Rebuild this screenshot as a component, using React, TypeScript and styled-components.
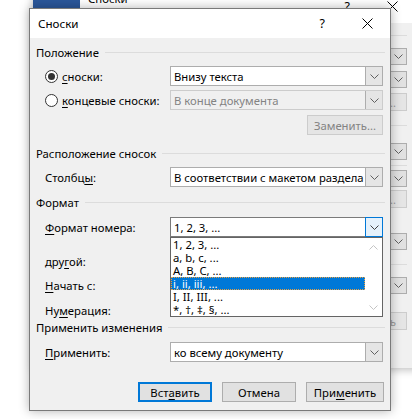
import styled, { createGlobalStyle } from 'styled-components';

const GlobalStyle = createGlobalStyle`
    html, body {
        margin: 0;
        padding: 0;
        background: #ffffff;
    }
    body {
        font-family: "Noto Sans", "Liberation Sans", sans-serif;
        font-size: 11.3px;
        color: #000000;
    }
`

const Chevron = ({up, color = '#606060'}: {up?: boolean; color?: string}) => (
    <svg width="9" height="5" viewBox="0 0 9 5">
        <polyline
            points={up ? '0.5,4.5 4.5,0.5 8.5,4.5' : '0.5,0.5 4.5,4.5 8.5,0.5'}
            fill="none"
            stroke={color}
            strokeWidth="1"
        />
    </svg>
);

const CloseIcon = () => (
    <svg width="11" height="11" viewBox="0 0 11 11">
        <path d="M0.5 0.5 L10.5 10.5 M10.5 0.5 L0.5 10.5" stroke="#000" strokeWidth="1" fill="none"/>
    </svg>
);

const formats = ['1, 2, 3, ...', 'a, b, c, ...', 'A, B, C, ...', 'i, ii, iii, ...', 'I, II, III, ...', '*, †, ‡, §, ...'];

export default function App() {
    return (
        <>
            <GlobalStyle/>
            <Stage>
                <BackWindow>
                    <BackTitle>
                        <AppMark/>
                        <BackTitleText>Сноски</BackTitleText>
                        <TitleButtons $right={35} $top={20}>
                            <Help>?</Help>
                            <CloseIcon/>
                        </TitleButtons>
                    </BackTitle>
                    <BackBody>
                        <BackLine $top={12}/>
                        <BackCombo $top={12}><Chevron/></BackCombo>
                        <BackCombo $top={6}><Chevron/></BackCombo>
                        <BackButton $top={5}>Заменить...</BackButton>
                        <BackLine $top={14}/>
                        <BackCombo $top={17}><Chevron/></BackCombo>
                        <BackLine $top={5}/>
                        <BackCombo $top={4}><Chevron/></BackCombo>
                        <BackButton $top={3}>Заменить...</BackButton>
                        <BackCombo $top={25}><Chevron/></BackCombo>
                        <BackLine $top={14}/>
                        <BackCombo $top={12}><Chevron/></BackCombo>
                        <BackButton $top={18}>Применить</BackButton>
                    </BackBody>
                </BackWindow>

                <Dialog>
                    <TitleBar>
                        <span>Сноски</span>
                        <TitleButtons $right={17}>
                            <Help>?</Help>
                            <CloseIcon/>
                        </TitleButtons>
                    </TitleBar>
                    <Body>
                        <GroupHeader $top={6}>
                            <span>Положение</span>
                            <GroupLine/>
                        </GroupHeader>
                        <Row $top={6}>
                            <RadioLabel>
                                <Radio $checked/>
                                <span><u>с</u>носки:</span>
                            </RadioLabel>
                            <Combo>
                                <ComboText>Внизу текста</ComboText>
                                <ComboArrow><Chevron/></ComboArrow>
                            </Combo>
                        </Row>
                        <Row $top={4}>
                            <RadioLabel>
                                <Radio/>
                                <span><u>к</u>онцевые сноски:</span>
                            </RadioLabel>
                            <Combo $disabled>
                                <ComboText>В конце документа</ComboText>
                                <ComboArrow><Chevron/></ComboArrow>
                            </Combo>
                        </Row>
                        <ButtonRow $top={5}>
                            <DisabledButton>Заменить...</DisabledButton>
                        </ButtonRow>

                        <GroupHeader $top={10}>
                            <span>Расположение сносок</span>
                            <GroupLine/>
                        </GroupHeader>
                        <Row $top={6}>
                            <FieldLabel>Столбц<u>ы</u>:</FieldLabel>
                            <Combo>
                                <ComboText>В соответствии с макетом раздела</ComboText>
                                <ComboArrow><Chevron/></ComboArrow>
                            </Combo>
                        </Row>

                        <GroupHeader $top={7}>
                            <span>Формат</span>
                            <GroupLine/>
                        </GroupHeader>
                        <Row $top={7} $raised>
                            <FieldLabel><u>Ф</u>ормат номера:</FieldLabel>
                            <Combo $focused>
                                <ComboText>1, 2, 3, ...</ComboText>
                                <ComboArrow $focused><Chevron color="#404040"/></ComboArrow>
                                <DropList>
                                    <Items>
                                        {formats.map((f, i) => (
                                            <Item key={f} $selected={i === 3}>{f}</Item>
                                        ))}
                                    </Items>
                                    <ScrollCol>
                                        <Chevron up color="#c4c4c4"/>
                                        <Chevron color="#c4c4c4"/>
                                    </ScrollCol>
                                </DropList>
                            </Combo>
                        </Row>
                        <Row $top={16} $short>
                            <FieldLabel>дру<u>г</u>ой:</FieldLabel>
                        </Row>
                        <Row $top={8} $short>
                            <FieldLabel><u>Н</u>ачать с:</FieldLabel>
                        </Row>
                        <Row $top={9} $short>
                            <FieldLabel>Ну<u>м</u>ерация:</FieldLabel>
                        </Row>

                        <GroupHeader $top={1}>
                            <span>Применить изменения</span>
                            <GroupLine/>
                        </GroupHeader>
                        <Row $top={7}>
                            <FieldLabel><u>П</u>рименить:</FieldLabel>
                            <Combo>
                                <ComboText>ко всему документу</ComboText>
                                <ComboArrow><Chevron/></ComboArrow>
                            </Combo>
                        </Row>

                        <Footer>
                            <DialogButton $default $width={74}>Вст<u>а</u>вить</DialogButton>
                            <DialogButton $width={74}>Отмена</DialogButton>
                            <DialogButton $width={78}>При<u>м</u>енить</DialogButton>
                        </Footer>
                    </Body>
                </Dialog>
            </Stage>
        </>
    );
}

const Stage = styled.div`
    position: relative;
    width: 412px;
    height: 419px;
    overflow: hidden;
    background: #ffffff;
`

const BackWindow = styled.div`
    margin: -22px 0 0 33px;
    width: 400px;
    height: 390px;
    display: flex;
    flex-direction: column;
    background: #f0f0f0;
    box-shadow: 0 2px 8px rgba(0, 0, 0, 0.25);
`

const BackTitle = styled.div`
    height: 45px;
    flex-shrink: 0;
    display: flex;
    align-items: flex-start;
    background: #ffffff;
`

const AppMark = styled.div`
    width: 47px;
    height: 30px;
    background: #2b579a;
`

const BackTitleText = styled.span`
    margin: 13px 0 0 8px;
`

const TitleButtons = styled.div<{$right: number; $top?: number}>`
    margin-left: auto;
    margin-top: ${p => p.$top ?? 0}px;
    padding-right: ${p => p.$right}px;
    display: flex;
    align-items: center;
    gap: 37px;
`

const Help = styled.span`
    font-size: 12.5px;
`

const BackBody = styled.div`
    display: flex;
    flex-direction: column;
    align-items: flex-end;
    padding-right: 26px;
`

const BackLine = styled.div<{$top: number}>`
    margin-top: ${p => p.$top}px;
    width: 100%;
    height: 1px;
    background: #dcdcdc;
`

const BackCombo = styled.div<{$top: number}>`
    margin-top: ${p => p.$top}px;
    width: 17px;
    height: 17px;
    box-sizing: border-box;
    border: 1px solid #adadad;
    background: #e1e1e1;
    display: flex;
    align-items: center;
    justify-content: center;
`

const BackButton = styled.div<{$top: number}>`
    margin-top: ${p => p.$top}px;
    width: 60px;
    height: 18px;
    box-sizing: border-box;
    border: 1px solid #cccccc;
    background: #e5e5e5;
    color: #9a9a9a;
    font-size: 11px;
    display: flex;
    align-items: center;
    justify-content: flex-end;
    padding-right: 10px;
`

const Dialog = styled.div`
    position: absolute;
    left: 29px;
    top: 8px;
    width: 362px;
    height: 403px;
    box-sizing: border-box;
    border: 1px solid #7a7a7a;
    box-shadow: 0 0 10px rgba(0, 0, 0, 0.3);
    display: flex;
    flex-direction: column;
    background: #f0f0f0;
`

const TitleBar = styled.div`
    height: 29px;
    flex-shrink: 0;
    display: flex;
    align-items: center;
    padding-left: 8px;
    background: #ffffff;
    font-size: 11.6px;
`

const Body = styled.div`
    flex: 1;
    display: flex;
    flex-direction: column;
    padding: 0 6px;
`

const GroupHeader = styled.div<{$top: number}>`
    margin-top: ${p => p.$top}px;
    height: 16px;
    display: flex;
    align-items: center;
    gap: 6px;
    white-space: nowrap;
`

const GroupLine = styled.div`
    flex: 1;
    height: 1px;
    background: #dcdcdc;
    margin-right: -1px;
`

const Row = styled.div<{$top: number; $short?: boolean; $raised?: boolean}>`
    margin-top: ${p => p.$top}px;
    height: ${p => (p.$short ? 16 : 20)}px;
    display: flex;
    align-items: center;
    padding-left: 9px;
    position: relative;
    z-index: ${p => (p.$raised ? 2 : 1)};

    u {
        text-decoration-thickness: 1px;
        text-underline-offset: 2px;
    }
`

const FieldLabel = styled.span`
    width: 125px;
    flex-shrink: 0;
    white-space: nowrap;
`

const RadioLabel = styled.label`
    width: 125px;
    flex-shrink: 0;
    display: flex;
    align-items: center;
    gap: 4px;
    white-space: nowrap;
`

const Radio = styled.span<{$checked?: boolean}>`
    width: 13px;
    height: 13px;
    box-sizing: border-box;
    border: 1px solid #333333;
    border-radius: 50%;
    background: #ffffff;
    display: flex;
    align-items: center;
    justify-content: center;

    &::after {
        content: '';
        display: ${p => (p.$checked ? 'block' : 'none')};
        width: 7px;
        height: 7px;
        border-radius: 50%;
        background: #333333;
    }
`

const Combo = styled.div<{$disabled?: boolean; $focused?: boolean}>`
    position: relative;
    width: 213px;
    height: 20px;
    box-sizing: border-box;
    display: flex;
    border: 1px solid ${p => (p.$disabled ? '#cccccc' : p.$focused ? '#7a7a7a' : '#adadad')};
    background: ${p => (p.$disabled ? '#f0f0f0' : '#ffffff')};
    color: ${p => (p.$disabled ? '#838383' : '#000000')};
`

const ComboText = styled.span`
    flex: 1;
    padding-left: 3px;
    display: flex;
    align-items: center;
    white-space: nowrap;
    overflow: hidden;
`

const ComboArrow = styled.span<{$focused?: boolean}>`
    width: 17px;
    margin: ${p => (p.$focused ? '-1px -1px -1px 0' : '0')};
    box-sizing: border-box;
    display: flex;
    align-items: center;
    justify-content: center;
    border-left: 1px solid #adadad;
    background: #e5e5e5;
    ${p => p.$focused && `
        width: 18px;
        border: 1px solid #0078d7;
        background: #e5f1fb;
    `}
`

const DropList = styled.div`
    position: absolute;
    left: -1px;
    top: 19px;
    width: 213px;
    height: 80px;
    box-sizing: border-box;
    border: 1px solid #646464;
    background: #ffffff;
    display: flex;
    overflow: hidden;
`

const Items = styled.div`
    flex: 1;
    display: flex;
    flex-direction: column;
`

const Item = styled.div<{$selected?: boolean}>`
    height: 13px;
    line-height: 13px;
    padding-left: 2px;
    box-sizing: border-box;
    white-space: nowrap;
    color: ${p => (p.$selected ? '#ffffff' : '#000000')};
    background: ${p => (p.$selected ? '#0078d7' : 'transparent')};
    outline: ${p => (p.$selected ? '1px dotted #e8a040' : 'none')};
    outline-offset: -1px;
`

const ScrollCol = styled.div`
    width: 17px;
    display: flex;
    flex-direction: column;
    align-items: center;
    justify-content: space-between;
    padding: 7px 0 6px;
    box-sizing: border-box;
`

const ButtonRow = styled.div<{$top: number}>`
    margin-top: ${p => p.$top}px;
    display: flex;
    justify-content: flex-end;
    padding-right: 1px;
`

const DisabledButton = styled.div`
    width: 76px;
    height: 20px;
    box-sizing: border-box;
    border: 1px solid #cccccc;
    background: #e5e5e5;
    color: #838383;
    display: flex;
    align-items: center;
    justify-content: center;
`

const Footer = styled.div`
    margin-top: 20px;
    display: flex;
    justify-content: flex-end;
    gap: 10px;

    u {
        text-decoration-thickness: 1px;
        text-underline-offset: 2px;
    }
`

const DialogButton = styled.div<{$default?: boolean; $width: number}>`
    width: ${p => p.$width}px;
    height: 20px;
    box-sizing: border-box;
    border: ${p => (p.$default ? '2px solid #0078d7' : '1px solid #adadad')};
    background: #e1e1e1;
    display: flex;
    align-items: center;
    justify-content: center;
    white-space: nowrap;
`
